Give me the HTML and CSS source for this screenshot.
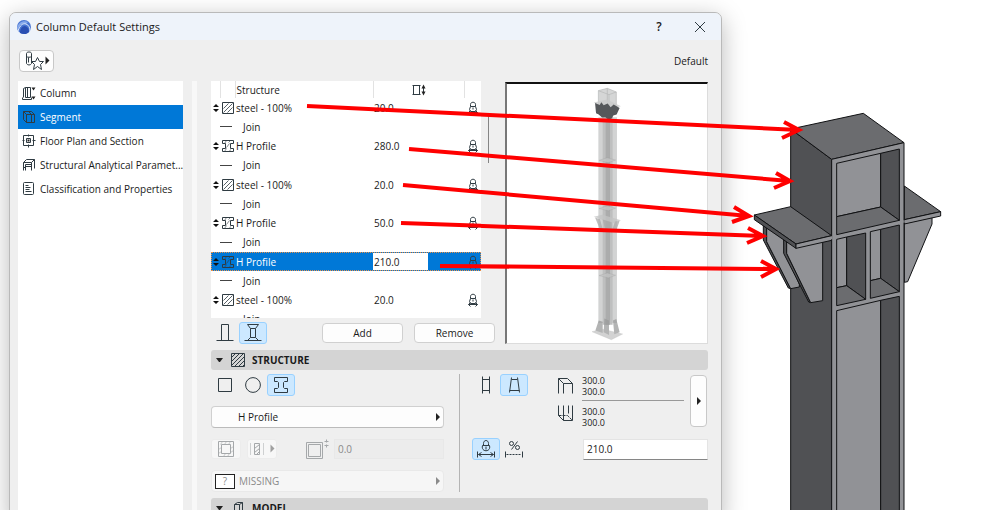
FILE: index.html
```
<!DOCTYPE html>
<html lang="en">
<head>
    <meta charset="UTF-8">
    <meta name="viewport" content="width=device-width, initial-scale=1.0">
    <title>Column Default Settings</title>
    <link rel="stylesheet" href="styles.css">
</head>
<body>
    <!-- shared icons -->
    <svg class="sprite" aria-hidden="true">
        <symbol id="i-sort" viewBox="0 0 6 8"><path d="M3 0L6 3H0zM3 8L0 5h6z" fill="#111"/></symbol>
        <symbol id="i-hatch" viewBox="-.5 -.5 14 14"><path d="M1 1h11v11H1z"/><path d="M2 7l5-5M2 11l9-9M6 11l5-5" stroke-width=".8"/></symbol>
        <symbol id="i-hprof" viewBox="-.5 -.5 14 14"><path d="M1 1h11v3H9v5h3v3H1V9h3V4H1z"/><path d="M3 4l2-3M7 3l2-2M5 8l3-4M3 12l2-3M8 12l1-2" stroke-width=".6"/></symbol>
        <symbol id="i-lock" viewBox="-.5 -.5 12 14"><path d="M3 5V3c0-3 5-3 5 0v2M3 5h5l1 3-1 2H3L2 8zM5.500 6v2M1 11h9M3 9l-2 2 2 2M8 9l2 2-2 2"/></symbol>
        <symbol id="i-right" viewBox="0 0 4 8"><path d="M0 0l4 4-4 4z" class="solid"/></symbol>
        <symbol id="i-down" viewBox="0 0 8 4"><path d="M0 0h7L4 4H3z" class="solid"/></symbol>
    </svg>

    <main class="page">
        <section class="dialog">
            <header class="titlebar">
                <svg class="logo" viewBox="0 0 14 14">
                    <circle cx="7" cy="7" r="7" fill="#4a76d2"/>
                    <path d="M0 8C1 3 6 0 11 2L9 4C5 3 2 6 1 10z" fill="#86a9ec"/>
                    <path d="M1 11C3 5 6 3 9 4c3 1 4 4 4 7" fill="none" stroke="#dfe9fb" stroke-width="1"/>
                    <path d="M3 13c0-4 2-7 5-7 3 1 4 3 4 6-3 3-6 2-9 1z" fill="#2a4fb3"/>
                </svg>
                <h1>Column Default Settings</h1>
                <button class="win-btn" type="button" aria-label="Help">?</button>
                <button class="win-btn" type="button" aria-label="Close">
                    <svg width="10" height="10" viewBox="0 0 10 10"><path d="M0 0l10 10M10 0L0 10"/></svg>
                </button>
            </header>

            <div class="toolbar">
                <button class="fav" type="button" aria-label="Favorites">
                    <svg width="27" height="20" viewBox="-.5 -.5 27 20">
                        <path d="M3 2c0-2 5-2 5 0v10c-1 2-4 2-5 0zM3 5c1 1 4 1 5 0M5 6v5"/>
                        <path d="M14 6l2 4h4l-3 3 1 5-4-3-4 3 1-5-3-3h4z" fill="#fff"/>
                        <path d="M22 5l4 4-4 4z" class="solid"/>
                    </svg>
                </button>
                <span>Default</span>
            </div>

            <div class="content">
                <nav class="pages">
                    <a href="#column">
                        <svg viewBox="-.5 -.5 14 14"><path d="M3 1h5v10H3zM3 1L1 2v9M0 11v2h9v-2M5 1v10"/><path d="M9 1h4l-2 3zM9 10h4l-2 3z" class="solid"/></svg>
                        Column
                    </a>
                    <a href="#segment" class="current">
                        <svg viewBox="-.5 -.5 14 14"><path d="M4 4h8v8H4zM1 1l3 3v8l-3-3zM1 1h8l3 3M6 1l3 3v8"/></svg>
                        Segment
                    </a>
                    <a href="#floorplan">
                        <svg viewBox="-.5 -.5 14 14"><path d="M1 1h10v10H1zM4 4h4v4H4zM6 0v2M6 10v3M0 6h2M10 6h3"/><path d="M5 5h2v2H5z" class="solid"/></svg>
                        Floor Plan and Section
                    </a>
                    <a href="#structural">
                        <svg viewBox="-.5 -.5 14 14"><path d="M1 12V4l3-3h8v9M1 4h8v8M9 4l3-3M3 12V6h6M3 8h6M3 8l-2 2"/></svg>
                        Structural Analytical Paramet...
                    </a>
                    <a href="#classification">
                        <svg viewBox="-.5 -.5 14 14"><rect x="1" y="0" width="10" height="12" rx="1"/><path d="M3 3h3M3 5h5M3 7h4M3 9h6"/></svg>
                        Classification and Properties
                    </a>
                </nav>
                <div class="splitter"></div>

                <div class="settings">
                    <div class="upper">
                        <div class="segments">
                            <div class="list">
                                <div class="list-view">
                                    <table>
                                        <thead>
                                            <tr>
                                                <th class="c-sort"></th>
                                                <th class="c-icon"></th>
                                                <th class="c-name">Structure</th>
                                                <th class="c-size"><svg width="14" height="12" viewBox="-.5 -.5 14 12"><path d="M1 1h6v9H1zM0 1h8M0 10h8M11 2v7"/><path d="M11 0l2 4H9zM11 11l2-4H9z" class="solid"/></svg></th>
                                                <th class="c-lock"></th>
                                            </tr>
                                        </thead>
                                        <tbody>
                                            <tr>
                                                <td><svg class="sort"><use href="#i-sort"/></svg></td>
                                                <td><svg class="ic"><use href="#i-hatch"/></svg></td>
                                                <td>steel - 100%</td>
                                                <td>20.0</td>
                                                <td><svg class="lock"><use href="#i-lock"/></svg></td>
                                            </tr>
                                            <tr class="join"><td></td><td><hr></td><td>Join</td><td></td><td></td></tr>
                                            <tr>
                                                <td><svg class="sort"><use href="#i-sort"/></svg></td>
                                                <td><svg class="ic"><use href="#i-hprof"/></svg></td>
                                                <td>H Profile</td>
                                                <td>280.0</td>
                                                <td><svg class="lock"><use href="#i-lock"/></svg></td>
                                            </tr>
                                            <tr class="join"><td></td><td><hr></td><td>Join</td><td></td><td></td></tr>
                                            <tr>
                                                <td><svg class="sort"><use href="#i-sort"/></svg></td>
                                                <td><svg class="ic"><use href="#i-hatch"/></svg></td>
                                                <td>steel - 100%</td>
                                                <td>20.0</td>
                                                <td><svg class="lock"><use href="#i-lock"/></svg></td>
                                            </tr>
                                            <tr class="join"><td></td><td><hr></td><td>Join</td><td></td><td></td></tr>
                                            <tr>
                                                <td><svg class="sort"><use href="#i-sort"/></svg></td>
                                                <td><svg class="ic"><use href="#i-hprof"/></svg></td>
                                                <td>H Profile</td>
                                                <td>50.0</td>
                                                <td><svg class="lock"><use href="#i-lock"/></svg></td>
                                            </tr>
                                            <tr class="join"><td></td><td><hr></td><td>Join</td><td></td><td></td></tr>
                                            <tr class="selected">
                                                <td><svg class="sort"><use href="#i-sort"/></svg></td>
                                                <td><svg class="ic"><use href="#i-hprof"/></svg></td>
                                                <td>H Profile</td>
                                                <td><input type="text" value="210.0" aria-label="Segment length"></td>
                                                <td><svg class="lock"><use href="#i-lock"/></svg></td>
                                            </tr>
                                            <tr class="join"><td></td><td><hr></td><td>Join</td><td></td><td></td></tr>
                                            <tr>
                                                <td><svg class="sort"><use href="#i-sort"/></svg></td>
                                                <td><svg class="ic"><use href="#i-hatch"/></svg></td>
                                                <td>steel - 100%</td>
                                                <td>20.0</td>
                                                <td><svg class="lock"><use href="#i-lock"/></svg></td>
                                            </tr>
                                            <tr class="join"><td></td><td><hr></td><td>Join</td><td></td><td></td></tr>
                                        </tbody>
                                    </table>
                                </div>
                                <div class="thumb"></div>
                            </div>
                            <div class="list-tools">
                                <button class="tool" type="button" aria-label="Single segment">
                                    <svg width="18" height="18" viewBox="-.5 -.5 18 18"><path d="M5 16V0h7v16M0 16h17"/></svg>
                                </button>
                                <button class="tool on" type="button" aria-label="Multi segment">
                                    <svg width="18" height="18" viewBox="-.5 -.5 18 18"><path d="M3 0h11l-3 4H6zM6 4v9M11 4v9M3 16l3-3h5l3 3M0 16h17"/></svg>
                                </button>
                                <button class="push" type="button">Add</button>
                                <button class="push" type="button">Remove</button>
                            </div>
                        </div>
                        <!-- ghosted 3D preview -->
                        <div class="preview">
                            <svg viewBox="0 0 600 780">
                                <path d="M274 100h56v620h-56z" fill="#d2d3d3"/>
                                <path d="M287 100h30v625h-30z" fill="#bebfbf"/>
                                <path d="M296 100h13v625h-13z" fill="#abacac"/>
                                <path d="M274 20l27-7 27 11v48l-22 8-32-12z" fill="#d5d6d6" stroke="#b5b6b6" stroke-width="2"/>
                                <path d="M274 20l32 12 22-8M306 32v48M301 13v42" fill="none" stroke="#b5b6b6" stroke-width="2"/>
                                <path d="M260 56l40-9 42 20-41 10z" fill="#c9caca" opacity=".8"/>
                                <path d="M264 57l14 6 5-8 7 9 12-5 9 11 9-8 18 10-9 20-10 3-4 8-10 5-10-8-10 1-10-9-8-4z" fill="#55585b"/>
                                <g fill="#c3c4c4" opacity=".75">
                                    <path d="M276 230l25-8 25 7-22 8zM276 375l25-8 25 7-22 8zM276 577l25-8 25 7-22 8z" stroke="#999"/>
                                    <path d="M260 400l26-6 56 16-26 10z"/>
                                    <path d="M264 402l15 5 8 30-10-3zM287 408l27 8v32l-20-12zM338 412l-14 2-10 30 14-3z" fill="#aaa"/>
                                    <path d="M255 746l30-8 62 15-34 17z" stroke="#aaa"/>
                                    <path d="M275 712l12 4v34l-22-8zM292 706l14 6v44l-16-8zM318 712l10-4 10 40-16 6z" fill="#9a9b9b"/>
                                </g>
                            </svg>
                        </div>
                    </div>

                    <h2 class="bar">
                        <svg class="fold"><use href="#i-down"/></svg>
                        <svg class="bar-icon" viewBox="-.5 -.5 16 16"><path d="M1 1h13v13H1zM1 5l4-4M1 9l8-8M1 13L13 1M4 14L14 4M8 14l6-6M12 14l2-2"/></svg>
                        STRUCTURE
                    </h2>

                    <div class="panel">
                        <div class="col">
                            <div class="row">
                                <button class="tool" type="button" aria-label="Rectangle"><svg width="16" height="16" viewBox="-.5 -.5 16 16"><path d="M1 1h13v13H1z"/></svg></button>
                                <button class="tool" type="button" aria-label="Circle"><svg width="16" height="16" viewBox="0 0 16 16"><circle cx="8" cy="8" r="7.400"/></svg></button>
                                <button class="tool on" type="button" aria-label="Profile"><svg width="16" height="16" viewBox="-.5 -.5 16 16"><path d="M1 0h13v4h-3l-1 1v5l1 1h3v4H1v-4h3l1-1V5L4 4H1z"/></svg></button>
                            </div>
                            <div class="pick">
                                <select aria-label="Profile"><option>H Profile</option></select>
                                <svg class="more"><use href="#i-right"/></svg>
                            </div>
                            <div class="row off">
                                <button class="soft" type="button" disabled aria-label="Veneer"><svg width="16" height="16" viewBox="-.5 -.5 16 16"><path d="M0 0h15v15H0zM3 3h9v9H3z"/><path d="M2 3l2-3M6 3l2-3M10 3l2-3M0 8l3-2M0 12l3-2M12 7l3-2M12 11l3-2M5 15l2-3M9 15l2-3" stroke-width=".6"/></svg></button>
                                <button class="soft" type="button" disabled aria-label="Veneer type"><svg width="26" height="14" viewBox="-.5 -.5 26 14"><path d="M5 1h5v11H5zM5 6l5-4M5 10l5-4M7 12l3-3"/><path d="M1 1v12M14 1v12" stroke-dasharray="1 1"/><path d="M21 2l4 4-4 4z" class="solid"/></svg></button>
                                <label class="thick">
                                    <svg width="24" height="22" viewBox="-.5 -.5 24 22"><path d="M1 4h16v16H1zM3 6h12v12H3zM21 1v3M21 6v3M19 3h4M19 7h4"/></svg>
                                    <input type="text" value="0.0" disabled aria-label="Veneer thickness">
                                </label>
                            </div>
                            <div class="pick off">
                                <span class="swatch">?</span>
                                <select disabled aria-label="Surface"><option>MISSING</option></select>
                                <svg class="more"><use href="#i-right"/></svg>
                            </div>
                        </div>
                        <div class="rule"></div>
                        <div class="col">
                            <div class="dims">
                                <button class="tool" type="button" aria-label="Uniform"><svg width="16" height="18" viewBox="-.5 -.5 16 18"><path d="M4 3h7v11H4zM4 0v17M11 0v17"/></svg></button>
                                <button class="tool on" type="button" aria-label="Tapered"><svg width="16" height="18" viewBox="-.5 -.5 16 18"><path d="M5 3h6M3 14h10M5 1L3 16M11 1l2 15"/></svg></button>
                                <div class="ends">
                                    <svg width="18" height="18" viewBox="-.5 -.5 18 18"><path d="M1 16V1h9l5 5v10M1 1l5 5h9M6 6v10"/></svg>
                                    <p>300.0<br>300.0</p>
                                    <svg width="18" height="18" viewBox="-.5 -.5 18 18"><path d="M1 1v10l5 5h9V1M6 1v15M11 1v8"/><path d="M1 11h9l5 5" stroke-dasharray="3 1"/></svg>
                                    <p>300.0<br>300.0</p>
                                </div>
                                <button class="tall" type="button" aria-label="Edit size"><svg class="more"><use href="#i-right"/></svg></button>
                            </div>
                            <div class="row">
                                <button class="tool on" type="button" aria-label="Fixed length"><svg width="18" height="18" viewBox="-.5 -.5 18 18"><path d="M6 5V3c0-4 5-4 5 0v2M5 5h7c2 7-9 7-7 0zM8.500 6v3M0 11v6M17 11v6M1 14h15M4 12l-3 2 3 2M13 12l3 2-3 2"/></svg></button>
                                <button class="tool" type="button" aria-label="Proportional length"><svg width="18" height="18" viewBox="-.5 -.5 18 18"><circle cx="6" cy="3" r="2"/><circle cx="12" cy="7" r="2"/><path d="M12 1L6 9M0 11v6M17 11v6"/><path d="M1 14h15" stroke-dasharray="2 1"/></svg></button>
                                <input class="length" type="text" value="210.0" aria-label="Length">
                            </div>
                        </div>
                    </div>

                    <h2 class="bar">
                        <svg class="fold"><use href="#i-down"/></svg>
                        <svg class="bar-icon" viewBox="-.5 -.5 16 16"><path d="M4 4l3-2h5v10l-3 3H4zM4 4h5v11M9 4l3-2"/></svg>
                        MODEL
                    </h2>
                </div>
            </div>
        </section>

        <!-- steel column with capital plate and gussets -->
        <svg class="model" viewBox="-54 -270 828 1530" preserveAspectRatio="xMinYMin meet">
            <g stroke="#111214" stroke-width="3" stroke-linejoin="round">
                <path class="dark" d="M152 117l123 91v1060H152z"/>
                <path class="mid" d="M152 117l218-47 122 88-217 50z"/>
                <path class="mid" d="M493 288l109 77-109 24z"/>
                <path class="light" d="M493 400l83-18v20l-73 173-10 2z"/>
                <path class="light" d="M493 389l109-24v13l-109 24z"/>
                <path class="dark" d="M70 405l10 8v42l72 141-7-2-75-144z"/>
                <path class="light" d="M80 413l60 40v40l38 90v8l-26 5L80 455z"/>
                <path class="dark" d="M131 445l9 8v37l72 148-6-2-75-146z"/>
                <path class="light" d="M140 453l108-2v181l-36 6-72-148z"/>
                <path class="mid" d="M43 375l109-25 123 87-107 25z"/>
                <path class="dark" d="M43 375l125 87v13L43 389z"/>
                <path class="light" d="M168 462l107-25v14l-107 24z"/>
                <path class="light" d="M275 208l217-50v1110H275z"/>
                <path class="light" d="M290 220l132-30v161l-132 29z"/>
                <path class="dark" d="M422 190l56-13v214l-56-40z"/>
                <path class="mid" d="M290 380l132-29 56 40-188 43z"/>
                <path class="light" d="M290 448l30-7v146l-30 6z"/>
                <path class="dark" d="M320 441l57-12v199l-57-41z"/>
                <path class="mid" d="M290 593l30-6 57 41-87 19z"/>
                <path class="light" d="M391 425l31-7v147l-31 7z"/>
                <path class="dark" d="M422 418l56-13v200l-56-40z"/>
                <path class="mid" d="M391 572l31-7 56 40-87 20z"/>
                <path class="light" d="M290 662l132-31v640H290z"/>
                <path class="dark" d="M422 631l56-12v650h-56z"/>
            </g>
            <path class="joint" d="M275 439v9M492 391v7"/>
        </svg>

        <!-- callout arrows -->
        <svg class="arrows" width="998" height="510" viewBox="0 0 998 510">
            <path d="M307 106L799 130M784 122l15 8-17 8"/>
            <path d="M409 149L790 181M776 173l14 8-16 7"/>
            <path d="M403 185L749 216M734 207l15 9-17 6"/>
            <path d="M401 223L763 236M748 228l15 8-16 7"/>
            <path d="M440 266L776 269M761 261l15 8-15 8"/>
        </svg>
    </main>
</body>
</html>
```
FILE: styles.css
```
*{
    box-sizing: border-box;
    margin: 0;
    padding: 0;
}
body{
    background: #fff;
    color: #1a1a1a;
    font-family: "Open Sans", "Noto Sans", sans-serif;
    font-size: 10px;
    font-weight: 500;
    line-height: 14px;
    overflow: hidden;
}
button, input, select{
    font: inherit;
    color: inherit;
}
svg{
    display: block;
    flex: none;
    fill: none;
    stroke: #2f3b42;
    stroke-width: 1;
}
.solid{
    fill: #222;
    stroke: none;
}
.sprite{
    position: absolute;
    width: 0;
    height: 0;
}
.page{
    position: relative;
    display: grid;
    grid-template-columns: minmax(0, 1fr) 276px;
    height: 100vh;
    padding-left: 9px;
    overflow: hidden;
}

/* dialog window */
.dialog{
    margin-top: 12px;
    height: 100vh;
    border: 1px solid #b9b9b9;
    border-radius: 7px;
    background: #efefef;
    box-shadow: 0 6px 24px rgba(0, 0, 0, 0.28);
    overflow: hidden;
}
.titlebar{
    display: flex;
    align-items: center;
    height: 27px;
    padding: 0 6px 0 7px;
    background: #eef3fa;
}
.logo{
    width: 14px;
    height: 14px;
    stroke: none;
}
.titlebar h1{
    flex: 1;
    margin-left: 5px;
    font-size: 11px;
    font-weight: 400;
}
.win-btn{
    display: flex;
    align-items: center;
    justify-content: center;
    width: 30px;
    height: 27px;
    margin-left: 11px;
    border: 0;
    background: none;
    font-size: 12px;
    font-weight: 600;
}
.toolbar{
    display: flex;
    align-items: center;
    justify-content: space-between;
    height: 41px;
    padding: 0 13px 0 9px;
}
.fav{
    display: flex;
    align-items: center;
    justify-content: center;
    width: 35px;
    height: 22px;
    border: 1px solid #c8c8c8;
    border-radius: 4px;
    background: #fdfdfd;
}
.content{
    display: flex;
    height: 100%;
    padding: 0 13px 0 8px;
}

/* page list */
.pages{
    flex: none;
    width: 165px;
    background: #fff;
}
.pages a{
    display: flex;
    align-items: center;
    gap: 4px;
    height: 24px;
    padding-left: 4px;
    color: #1a1a1a;
    text-decoration: none;
    white-space: nowrap;
}
.pages svg{
    width: 14px;
    height: 14px;
}
.pages .current{
    background: #0078d7;
    color: #fff;
}
.splitter{
    width: 5px;
    margin: 0 14px 0 9px;
    background: #f8f8f8;
}
.settings{
    flex: 1;
    min-width: 0;
}

/* segment list */
.upper{
    display: flex;
    gap: 10px;
}
.segments{
    flex: 1;
    min-width: 0;
}
.list{
    display: flex;
}
.list-view{
    flex: 1;
    height: 237px;
    background: #fff;
    overflow: hidden;
}
.thumb{
    width: 1px;
    height: 47px;
    margin: 35px 6px 0 7px;
    background: #858585;
}
table{
    width: 100%;
    height: 248px;
    table-layout: fixed;
    border-collapse: collapse;
}
th{
    height: 17px;
    border-right: 1px solid #e2e2e2;
    font-weight: 500;
    text-align: left;
}
th:last-child{
    border-right: 0;
}
.c-sort{
    width: 9px;
}
.c-icon{
    width: 15px;
}
.c-size{
    width: 91px;
}
.c-lock{
    width: 17px;
}
.c-size svg{
    margin: 0 auto;
}
.c-name, td:nth-child(3), td:nth-child(4){
    padding-left: 1px;
}
td{
    height: 19px;
}
td svg{
    margin: 0 auto;
}
.sort{
    width: 6px;
    height: 8px;
    stroke: none;
}
.ic{
    width: 14px;
    height: 14px;
}
.lock{
    width: 12px;
    height: 14px;
}
.join td:nth-child(3){
    padding-left: 8px;
}
hr{
    width: 12px;
    border: 0;
    border-top: 1px solid #444;
}
.selected{
    background: #0078d7;
    color: #fff;
    outline: 1px dotted #e8924a;
    outline-offset: -1px;
}
.selected td:nth-child(4){
    padding-left: 0;
}
.selected input{
    display: block;
    width: 55px;
    height: 17px;
    padding-left: 1px;
    border: 0;
    background: #fff;
    color: #1a1a1a;
}
.list-tools{
    display: flex;
    align-items: center;
    margin-top: 4px;
}
.tool{
    display: flex;
    align-items: center;
    justify-content: center;
    flex: none;
    width: 28px;
    height: 22px;
    border: 1px solid transparent;
    border-radius: 3px;
    background: none;
}
.tool.on{
    border-color: #99d1ff;
    background: #cce8ff;
}
.push{
    width: 81px;
    height: 20px;
    border: 1px solid #d0d0d0;
    border-radius: 4px;
    background: #fdfdfd;
}
.push:nth-child(3){
    margin: 0 11px 0 auto;
}
.preview{
    flex: none;
    width: 203px;
    height: 262px;
    margin-top: 1px;
    border: 1px solid #dcdcdc;
    border-top: 2px solid #111;
    border-left: 2px solid #777;
    background: #fff;
}
.preview svg{
    width: 100%;
    height: 100%;
    stroke: none;
}

/* collapsible sections */
.bar{
    display: flex;
    align-items: center;
    height: 20px;
    margin-top: 6px;
    padding-left: 5px;
    border-radius: 3px;
    background: #d4d4d4;
    font-size: 10px;
    font-weight: 700;
}
.fold{
    width: 8px;
    height: 4px;
}
.bar-icon{
    width: 16px;
    height: 16px;
    margin: 0 6px;
}
.panel{
    display: grid;
    grid-template-columns: minmax(0, 1fr) 1px 248px;
    padding-top: 4px;
}
.col{
    display: flex;
    flex-direction: column;
    gap: 10px;
}
.rule{
    background: #b4b4b4;
}
.panel .col:first-child{
    padding-right: 15px;
}
.panel .col:last-child{
    padding-left: 12px;
}
.row{
    display: flex;
    align-items: center;
    height: 22px;
}
.pick{
    display: flex;
    align-items: center;
    height: 22px;
    padding-right: 3px;
    border: 1px solid #d0d0d0;
    border-bottom-color: #bbb;
    border-radius: 4px;
    background: #fdfdfd;
}
.pick select{
    flex: 1;
    height: 20px;
    padding-left: 26px;
    border: 0;
    background: none;
    appearance: none;
    opacity: 1;
}
.more{
    width: 4px;
    height: 8px;
}
.off{
    color: #8a8a8a;
}
.off svg{
    stroke: #a5a8aa;
}
.off .solid{
    fill: #a0a0a0;
}
.off .more{
    opacity: 0.5;
}
.pick.off{
    border-color: #e9e9e9;
    background: #f6f6f6;
}
.pick.off select{
    padding-left: 4px;
}
.swatch{
    width: 20px;
    height: 15px;
    margin-left: 3px;
    border: 1px solid #222;
    background: #fff;
    line-height: 13px;
    text-align: center;
}
.soft{
    display: flex;
    align-items: center;
    justify-content: center;
    flex: none;
    width: 30px;
    height: 20px;
    margin-right: 6px;
    border: 1px solid #ececec;
    border-radius: 3px;
    background: #f7f7f7;
}
.thick{
    display: flex;
    align-items: center;
    flex: 1;
    gap: 5px;
    min-width: 0;
    margin-left: 22px;
}
.thick input{
    flex: 1;
    min-width: 0;
    height: 20px;
    padding-left: 3px;
    border: 1px solid #e8e8e8;
    background: #ececec;
}
.dims{
    display: flex;
    height: 54px;
}
.ends{
    flex: 1;
    display: grid;
    grid-template-columns: 18px 1fr;
    grid-template-rows: 27px 27px;
    column-gap: 7px;
    margin: 0 6px 0 29px;
}
.ends svg{
    margin-top: 3px;
}
.ends p{
    padding-top: 1px;
    font-size: 9px;
    line-height: 11px;
}
.ends p:nth-child(2){
    border-bottom: 1px solid #999;
}
.ends p:last-child{
    padding-top: 5px;
}
.tall{
    display: flex;
    align-items: center;
    justify-content: center;
    width: 17px;
    height: 52px;
    margin: 1px 1px 0 0;
    border: 1px solid #c8c8c8;
    border-radius: 4px;
    background: #fdfdfd;
}
.length{
    flex: 1;
    min-width: 0;
    height: 21px;
    margin-left: 55px;
    padding-left: 3px;
    border: 1px solid #e4e4e4;
    border-bottom: 1px solid #868686;
    background: #fff;
}

/* 3D model and arrows */
.model{
    width: 276px;
    height: 510px;
    z-index: 1;
}
.dark{
    fill: #505154;
}
.mid{
    fill: #6b6c6f;
}
.light{
    fill: #919296;
}
.joint{
    stroke: #919296;
    stroke-width: 4;
}
.arrows{
    position: absolute;
    left: 0;
    top: 0;
    z-index: 2;
    stroke: #f00;
    stroke-width: 4;
    pointer-events: none;
}
```
